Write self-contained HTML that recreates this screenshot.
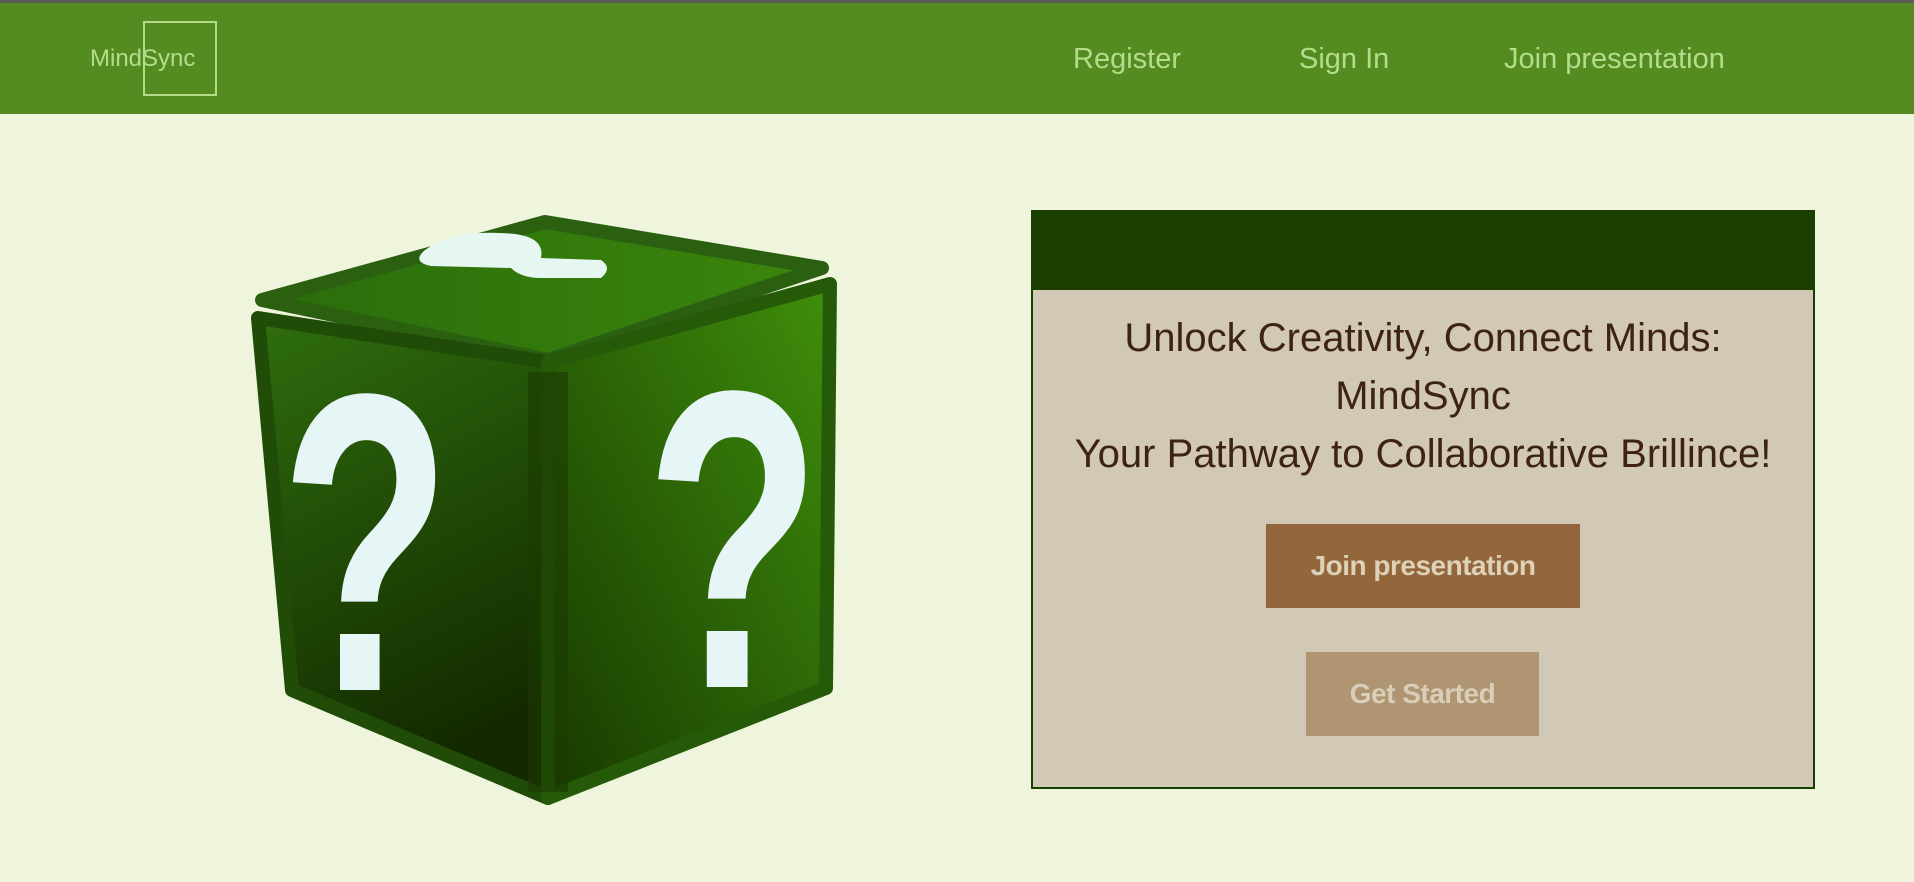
<!DOCTYPE html>
<html><head><meta charset="utf-8"><style>
*{margin:0;padding:0;box-sizing:border-box}
body{width:1914px;height:882px;background:#eff5dc;font-family:"Liberation Sans",sans-serif;position:relative;overflow:hidden}
.hdr{position:absolute;left:0;top:0;width:1914px;height:114px;background:#548c22;border-top:3px solid #5b5e58}
.logo-box{position:absolute;left:143px;top:18px;width:74px;height:75px;border:2px solid #b5dc8a}
.logo-t{position:absolute;left:90px;top:42px;font-size:24px;color:#b5dc8a}
.nav{position:absolute;top:40px;font-size:29px;color:#b5dc8a}
.card{position:absolute;left:1031px;top:210px;width:784px;height:579px;background:#d1c9b5;border:2px solid #1a3f00}
.ch{height:78px;background:#1a3f00}
.txt{text-align:center;color:#3e2410;font-size:40px;line-height:58px;margin-top:19px}
.b1{position:absolute;left:233px;top:312px;width:314px;height:84px;background:#93673b;color:#ddd1b8;font-size:28px;font-weight:bold;text-align:center;line-height:84px;letter-spacing:-0.5px}
.b2{position:absolute;left:273px;top:440px;width:233px;height:84px;background:#af9571;color:#d8ceb9;font-size:28px;font-weight:bold;text-align:center;line-height:84px;letter-spacing:-0.5px}
</style></head><body>
<div class="hdr">
<div class="logo-box"></div>
<div class="logo-t">MindSync</div>
<div class="nav" style="left:1073px">Register</div>
<div class="nav" style="left:1299px">Sign In</div>
<div class="nav" style="left:1504px">Join presentation</div>
</div>
<svg style="position:absolute;left:0;top:0" width="900" height="882">
<defs>
<linearGradient id="lf" x1="0" y1="0" x2="0.3" y2="1"><stop offset="0" stop-color="#2f6e0e"/><stop offset="1" stop-color="#132a00"/></linearGradient>
<linearGradient id="rf" x1="1" y1="0" x2="0" y2="1"><stop offset="0" stop-color="#3f8f0c"/><stop offset="1" stop-color="#183800"/></linearGradient>
<linearGradient id="tf" x1="0" y1="0" x2="1" y2="0"><stop offset="0" stop-color="#2a6c0c"/><stop offset="1" stop-color="#3a870c"/></linearGradient>
</defs>
<polygon points="262,300 545,222 822,268 548,360" fill="url(#tf)" stroke="#2a6010" stroke-width="14" stroke-linejoin="round"/>
<polygon points="258,318 548,362 548,798 292,690" fill="url(#lf)" stroke="#204c08" stroke-width="14" stroke-linejoin="round"/>
<polygon points="548,362 830,284 826,688 548,798" fill="url(#rf)" stroke="#255a08" stroke-width="14" stroke-linejoin="round"/>
<rect x="528" y="372" width="40" height="420" fill="#1c3a02" opacity="0.6"/>
<path d="M425 250 q30-22 90-16 q30 4 26 24 l60 2 q12 8 0 18 l-60 0 q-20 0 -30-10 l-80-2 q-20-4-6-16z" fill="#e6f6f0"/>
<text font-size="425" font-weight="bold" fill="#e6f5f6" font-family="Liberation Sans,sans-serif" transform="translate(280,690) scale(0.66,1)">?</text>
<text font-size="425" font-weight="bold" fill="#e6f5f6" font-family="Liberation Sans,sans-serif" transform="translate(645,687) scale(0.68,1)">?</text>
</svg>
<div class="card">
<div class="ch"></div>
<div class="txt">Unlock Creativity, Connect Minds:<br>MindSync<br>Your Pathway to Collaborative Brillince!</div>
<div class="b1">Join presentation</div>
<div class="b2">Get Started</div>
</div>
</body></html>
